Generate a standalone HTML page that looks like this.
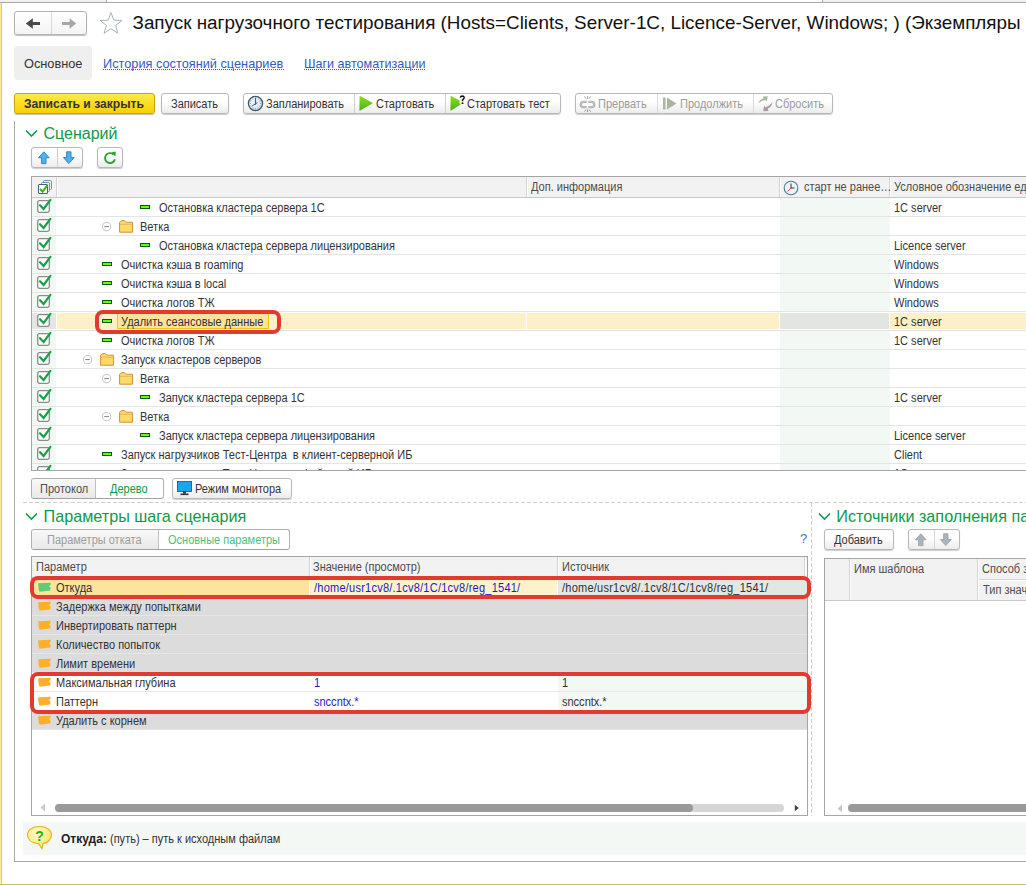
<!DOCTYPE html>
<html><head><meta charset="utf-8"><style>
html,body{margin:0;padding:0;width:1026px;height:885px;overflow:hidden;background:#fff;}
body{position:relative;font-family:"Liberation Sans", sans-serif;}
div,svg{position:absolute;}
.t{line-height:1;white-space:nowrap;}
</style></head><body>
<div style="left:0px;top:0px;width:1026px;height:2px;background:#f0f0f0"></div>
<div style="left:107px;top:0px;width:715px;height:2px;background:#fff"></div>
<div style="left:0px;top:2px;width:1026px;height:1px;background:#a8a8a8"></div>
<div style="left:106px;top:0px;width:1px;height:2px;background:#a8a8a8"></div>
<div style="left:822px;top:0px;width:1px;height:2px;background:#a8a8a8"></div>
<div style="left:0px;top:3px;width:2px;height:882px;background:linear-gradient(90deg,#fde99a 0,#fde99a 1px,#e0cc80 1px)"></div>
<div style="left:0px;top:884px;width:1026px;height:1px;background:#c9ba72"></div>
<div style="left:14px;top:11px;width:73px;height:24px;border:1px solid #b3b3b3;border-radius:3px;box-sizing:border-box;background:linear-gradient(#fff,#f4f4f4);box-shadow:0 1px 1px rgba(0,0,0,.25)"></div>
<div style="left:51px;top:12px;width:1px;height:22px;background:#d8d8d8"></div>
<svg style="left:24px;top:17px" width="18" height="12" viewBox="0 0 18 12"><path d="M1.8 6.5 L8.8 1.3 L8.8 5.1 L16 5.1 L16 7.9 L8.8 7.9 L8.8 11.7 Z" fill="#4a4a4a"/></svg>
<svg style="left:60px;top:17px" width="18" height="12" viewBox="0 0 18 12"><path d="M16.2 6.5 L9.6 1.3 L9.6 5.1 L2 5.1 L2 7.9 L9.6 7.9 L9.6 11.7 Z" fill="#a6a6a6"/></svg>
<svg style="left:98px;top:11px" width="26" height="24" viewBox="0 0 26 24"><path d="M13 1.5 L15.9 9.2 L24 9.4 L17.6 14.4 L19.9 22.3 L13 17.6 L6.1 22.3 L8.4 14.4 L2 9.4 L10.1 9.2 Z" fill="none" stroke="#a9b2bb" stroke-width="1"/></svg>
<div class="t" style="left:132.5px;top:14.04px;font-size:18.85px;color:#111;white-space:nowrap">Запуск нагрузочного тестирования (Hosts=Clients, Server-1C, Licence-Server, Windows; ) (Экземпляры</div>
<div style="left:14px;top:46px;width:78px;height:34px;background:#efefef;border-radius:4px"></div>
<div class="t" style="left:24px;top:57.51px;font-size:12.75px;color:#333;">Основное</div>
<div class="t" style="left:103px;top:57.81px;font-size:12.75px;color:#3558c4;">История состояний сценариев</div>
<div style="left:103px;top:69px;width:181px;height:1px;background:repeating-linear-gradient(90deg,#3558c4 0,#3558c4 1px,transparent 1px,transparent 2px)"></div>
<div class="t" style="left:304px;top:57.98px;font-size:12.55px;color:#3558c4;">Шаги автоматизации</div>
<div style="left:304px;top:69px;width:122px;height:1px;background:repeating-linear-gradient(90deg,#3558c4 0,#3558c4 1px,transparent 1px,transparent 2px)"></div>
<div style="left:14px;top:93px;width:141px;height:21px;border:1px solid #c9a800;border-radius:3px;box-sizing:border-box;background:linear-gradient(#ffe94d,#f6d000);box-shadow:0 1px 1px rgba(0,0,0,.25)"></div>
<div class="t" style="left:24px;top:97.76px;font-size:12.1px;color:#333;font-weight:bold">Записать и закрыть</div>
<div style="left:161px;top:93px;width:68px;height:21px;border:1px solid #b8b8b8;border-radius:3px;box-sizing:border-box;background:linear-gradient(#fff 40%,#ececec);box-shadow:0 1px 1px rgba(0,0,0,.2)"></div>
<div class="t" style="left:171px;top:97.84px;font-size:12px;transform:scaleX(0.917);transform-origin:0 0;color:#333;">Записать</div>
<div style="left:243px;top:93px;width:318px;height:21px;border:1px solid #b8b8b8;border-radius:3px;box-sizing:border-box;background:linear-gradient(#fff 40%,#ececec);box-shadow:0 1px 1px rgba(0,0,0,.2)"></div>
<div style="left:354px;top:94px;width:1px;height:19px;background:#d0d0d0"></div>
<div style="left:445px;top:94px;width:1px;height:19px;background:#d0d0d0"></div>
<svg style="left:247px;top:95px" width="17" height="17" viewBox="0 0 17 17"><defs><radialGradient id="cg" cx="0.35" cy="0.3" r="0.8"><stop offset="0" stop-color="#ffffff"/><stop offset="1" stop-color="#bfe0f5"/></radialGradient></defs><circle cx="8.5" cy="8.5" r="7.1" fill="url(#cg)" stroke="#3d5566" stroke-width="1.3"/><circle cx="8.50" cy="3.30" r="0.6" fill="#e86a5a"/><circle cx="11.10" cy="4.00" r="0.6" fill="#e86a5a"/><circle cx="13.00" cy="5.90" r="0.6" fill="#e86a5a"/><circle cx="13.70" cy="8.50" r="0.6" fill="#e86a5a"/><circle cx="13.00" cy="11.10" r="0.6" fill="#e86a5a"/><circle cx="11.10" cy="13.00" r="0.6" fill="#e86a5a"/><circle cx="8.50" cy="13.70" r="0.6" fill="#e86a5a"/><circle cx="5.90" cy="13.00" r="0.6" fill="#e86a5a"/><circle cx="4.00" cy="11.10" r="0.6" fill="#e86a5a"/><circle cx="3.30" cy="8.50" r="0.6" fill="#e86a5a"/><circle cx="4.00" cy="5.90" r="0.6" fill="#e86a5a"/><circle cx="5.90" cy="4.00" r="0.6" fill="#e86a5a"/><path d="M8.5 2.8 V9.8" stroke="#2a6aa8" stroke-width="1.2"/><path d="M5 11 L10.5 7.6" stroke="#2a6aa8" stroke-width="1"/></svg>
<div class="t" style="left:266px;top:97.84px;font-size:12px;transform:scaleX(0.917);transform-origin:0 0;color:#333;">Запланировать</div>
<svg style="left:358px;top:95px" width="16" height="17" viewBox="0 0 16 17"><defs><linearGradient id="pg" x1="0" y1="0" x2="0" y2="1"><stop offset="0" stop-color="#8ede14"/><stop offset="1" stop-color="#4caf22"/></linearGradient></defs><path d="M1.6 1.6 Q1.2 0.6 2.2 1.1 L14.4 7.7 Q15 8.1 14.4 8.5 L2.2 15.6 Q1.2 16.1 1.4 15 Z" fill="url(#pg)"/></svg>
<div class="t" style="left:376px;top:97.84px;font-size:12px;transform:scaleX(0.917);transform-origin:0 0;color:#333;">Стартовать</div>
<svg style="left:449px;top:95px" width="17" height="17" viewBox="0 0 17 17"><path d="M1.6 1.6 Q1.2 0.6 2.2 1.1 L10.6 5.6 L10.6 8.6 L11.6 9.4 L2.2 15.6 Q1.2 16.1 1.4 15 Z" fill="url(#pg)"/><path d="M11.3 2.6 Q11.6 1.1 13.3 1.1 Q15.2 1.2 15.1 2.9 Q15 4 13.6 4.8 L13.5 6.3" fill="none" stroke="#111" stroke-width="1.5"/><rect x="12.6" y="7.4" width="1.8" height="1.6" fill="#111"/></svg>
<div class="t" style="left:467px;top:97.84px;font-size:12px;transform:scaleX(0.917);transform-origin:0 0;color:#333;">Стартовать тест</div>
<div style="left:575px;top:93px;width:258px;height:21px;border:1px solid #b8b8b8;border-radius:3px;box-sizing:border-box;background:linear-gradient(#fff 40%,#ececec);box-shadow:0 1px 1px rgba(0,0,0,.2)"></div>
<div style="left:657px;top:94px;width:1px;height:19px;background:#dadada"></div>
<div style="left:753px;top:94px;width:1px;height:19px;background:#dadada"></div>
<svg style="left:579px;top:95px" width="18" height="18" viewBox="0 0 18 18"><path d="M7.6 6.8 H4.4 A2.65 2.65 0 0 0 4.4 12.1 H7.6 M9.4 6.8 H12.6 A2.65 2.65 0 0 1 12.6 12.1 H9.4" fill="none" stroke="#a9a9a9" stroke-width="2.3"/><path d="M7.6 6.8 H4.4 A2.65 2.65 0 0 0 4.4 12.1 H7.6 M9.4 6.8 H12.6 A2.65 2.65 0 0 1 12.6 12.1 H9.4" fill="none" stroke="#dadada" stroke-width="0.7"/><path d="M5.2 1.6 L7.3 3.6 M8.5 1.2 V3.8 M11.8 1.6 L9.7 3.6 M5.2 16.6 L7.3 14.6 M8.5 17 V14.4 M11.8 16.6 L9.7 14.6" stroke="#a08c8c" stroke-width="0.9"/></svg>
<div class="t" style="left:598px;top:97.84px;font-size:12px;transform:scaleX(0.917);transform-origin:0 0;color:#9a9a9a;">Прервать</div>
<svg style="left:662px;top:96px" width="16" height="15" viewBox="0 0 16 15"><rect x="1" y="1.5" width="2.5" height="12" fill="#a9b5a0"/><path d="M5 1.5 L14.5 7.5 L5 13.5 Z" fill="#a9b5a0"/></svg>
<div class="t" style="left:680px;top:97.84px;font-size:12px;transform:scaleX(0.917);transform-origin:0 0;color:#9a9a9a;">Продолжить</div>
<svg style="left:757px;top:95px" width="17" height="18" viewBox="0 0 17 18"><path d="M1.2 8.6 C2 5.2 4.2 3.8 6.6 3.4 L5.6 1.4 L10.8 1.3 L9.8 6.6 L8.5 5.0 C5.6 5.4 3 6.8 1.2 8.6 Z" fill="#a9b99e"/><path d="M15.6 6.6 C15.2 10.5 13.2 13 10.6 13.8 L11.6 15.9 L6.2 16.3 L7.0 10.8 L8.5 12.3 C11.6 11.4 14 9.6 15.6 6.6 Z" fill="#b09a9a"/></svg>
<div class="t" style="left:775px;top:97.84px;font-size:12px;transform:scaleX(0.917);transform-origin:0 0;color:#9a9a9a;">Сбросить</div>
<div style="left:14px;top:121px;width:1px;height:741px;background:#a8a8a8"></div>
<div style="left:14px;top:861px;width:1012px;height:1px;background:#a8a8a8"></div>
<svg style="left:25px;top:129px" width="13" height="9" viewBox="0 0 13 9"><path d="M1 1.5 L6.5 7 L12 1.5" fill="none" stroke="#0e9a48" stroke-width="1.6"/></svg>
<div class="t" style="left:43.5px;top:126.26px;font-size:16.0px;color:#0e9a48;">Сценарий</div>
<div style="left:31px;top:147px;width:52px;height:21px;border:1px solid #b8b8b8;border-radius:3px;box-sizing:border-box;background:linear-gradient(#fff 40%,#ececec);box-shadow:0 1px 1px rgba(0,0,0,.2)"></div>
<div style="left:57px;top:148px;width:1px;height:19px;background:#d0d0d0"></div>
<svg style="left:37px;top:150px" width="14" height="15" viewBox="0 0 14 15"><path d="M6.8 1.8 L12.2 7.8 L9 7.8 L9 13.6 L4.6 13.6 L4.6 7.8 L1.4 7.8 Z" fill="#4fb2ee" stroke="#2e7cc0" stroke-width="0.9" stroke-linejoin="round"/></svg>
<svg style="left:62px;top:150px" width="14" height="15" viewBox="0 0 14 15"><path d="M6.8 13.6 L12.2 7.6 L9 7.6 L9 1.8 L4.6 1.8 L4.6 7.6 L1.4 7.6 Z" fill="#4fb2ee" stroke="#2e7cc0" stroke-width="0.9" stroke-linejoin="round"/></svg>
<div style="left:97px;top:147px;width:26px;height:21px;border:1px solid #b8b8b8;border-radius:3px;box-sizing:border-box;background:linear-gradient(#fff 40%,#ececec);box-shadow:0 1px 1px rgba(0,0,0,.2)"></div>
<svg style="left:102px;top:150px" width="16" height="16" viewBox="0 0 16 16"><path d="M11.6 4.6 A5 5 0 1 0 12.9 9.2" fill="none" stroke="#2aa52a" stroke-width="1.9"/><path d="M9.2 2.6 L13.8 1.6 L13.4 6.4 Z" fill="#2aa52a"/></svg>
<div style="left:31px;top:176px;width:1000px;height:295px;border:1px solid #a5a5a5;box-sizing:border-box;overflow:hidden;background:#fff">
<div style="left:0px;top:0px;width:994px;height:20px;background:#f2f2f2"></div>
<div style="left:0px;top:20px;width:994px;height:1px;background:#c8c8c8"></div>
<div style="left:24px;top:0px;width:1px;height:20px;background:#d4d4d4"></div>
<div style="left:25px;top:0px;width:1px;height:20px;background:#fff"></div>
<div style="left:494px;top:0px;width:1px;height:20px;background:#d4d4d4"></div>
<div style="left:495px;top:0px;width:1px;height:20px;background:#fff"></div>
<div style="left:747px;top:0px;width:1px;height:20px;background:#d4d4d4"></div>
<div style="left:748px;top:0px;width:1px;height:20px;background:#fff"></div>
<div style="left:857px;top:0px;width:1px;height:20px;background:#d4d4d4"></div>
<div style="left:858px;top:0px;width:1px;height:20px;background:#fff"></div>
<svg style="left:5px;top:2px" width="16" height="16" viewBox="0 0 16 16"><rect x="6.5" y="1.5" width="8" height="9" rx="1" fill="#e9f3e0" stroke="#6a8aa0" stroke-width="0.9"/><rect x="4.5" y="3.5" width="8" height="9" rx="1" fill="#e9f3e0" stroke="#6a8aa0" stroke-width="0.9"/><rect x="1.5" y="5.5" width="9" height="9" rx="1" fill="#fff" stroke="#3f6483" stroke-width="1.1"/><path d="M3 10 L5.5 12.5 L10.5 6.5" stroke="#3fb020" stroke-width="2" fill="none"/></svg>
<div class="t" style="left:499px;top:3.84px;font-size:12px;transform:scaleX(0.917);transform-origin:0 0;color:#4d4d4d;">Доп. информация</div>
<svg style="left:751px;top:3px" width="16" height="16" viewBox="0 0 16 16"><circle cx="8" cy="8" r="6.8" fill="#eef3f8" stroke="#56779a" stroke-width="1.1"/><path d="M8 3.5 V8 H11.5" stroke="#333" stroke-width="1" fill="none"/><path d="M8 8 L4.8 11.5" stroke="#e03030" stroke-width="1"/></svg>
<div class="t" style="left:772px;top:3.84px;font-size:12px;transform:scaleX(0.917);transform-origin:0 0;color:#4d4d4d;">старт не ранее…</div>
<div class="t" style="left:862px;top:3.84px;font-size:12px;transform:scaleX(0.917);transform-origin:0 0;color:#4d4d4d;white-space:nowrap">Условное обозначение ед</div>
<div style="left:25px;top:21px;width:969px;height:18px;background:#fff"></div>
<div style="left:0px;top:21px;width:24px;height:18px;background:#f2f8f4"></div>
<div style="left:748px;top:21px;width:110px;height:18px;background:#f2f8f4"></div>
<div style="left:0px;top:39px;width:994px;height:1px;background:#e4e4e4"></div>
<svg style="left:4px;top:21px" width="17" height="17" viewBox="0 0 17 17"><rect x="1.7" y="2.7" width="11.6" height="11.6" rx="1.8" fill="#fff" stroke="#8a8a8a" stroke-width="1.3"/><path d="M4 7.2 L7.6 11 L14.4 1.8" stroke="#17a14a" stroke-width="2.2" fill="none" stroke-linecap="round"/></svg>
<div style="left:108px;top:28px;width:10px;height:4px;background:#66ff00;border:1px solid #075a07;box-sizing:border-box"></div>
<div class="t" style="left:127px;top:25.34px;font-size:12px;transform:scaleX(0.917);transform-origin:0 0;color:#333;white-space:nowrap">Остановка кластера сервера 1С</div>
<div class="t" style="left:862px;top:25.34px;font-size:12px;transform:scaleX(0.917);transform-origin:0 0;color:#333;">1С server</div>
<div style="left:25px;top:40px;width:969px;height:18px;background:#fff"></div>
<div style="left:0px;top:40px;width:24px;height:18px;background:#f2f8f4"></div>
<div style="left:748px;top:40px;width:110px;height:18px;background:#f2f8f4"></div>
<div style="left:0px;top:58px;width:994px;height:1px;background:#e4e4e4"></div>
<svg style="left:4px;top:40px" width="17" height="17" viewBox="0 0 17 17"><rect x="1.7" y="2.7" width="11.6" height="11.6" rx="1.8" fill="#fff" stroke="#8a8a8a" stroke-width="1.3"/><path d="M4 7.2 L7.6 11 L14.4 1.8" stroke="#17a14a" stroke-width="2.2" fill="none" stroke-linecap="round"/></svg>
<svg style="left:70px;top:45px" width="10" height="10" viewBox="0 0 10 10"><circle cx="4.6" cy="4.6" r="4.1" fill="#fff" stroke="#b4b4b4" stroke-width="0.8"/><path d="M2.3 4.6 H6.9" stroke="#707070" stroke-width="0.9"/></svg>
<svg style="left:87px;top:43px" width="15" height="13" viewBox="0 0 15 13"><path d="M0.6 12.2 V2.6 Q0.6 2 1.2 1.8 L2.6 0.6 H5.4 L6.8 2.2 H13 Q13.6 2.2 13.6 2.8 V12.2 Z" fill="#fdda6a" stroke="#d28f3a" stroke-width="1"/><path d="M0.8 4.3 H13.4" stroke="#e9b24c" stroke-width="0.9"/></svg>
<div class="t" style="left:108px;top:44.34px;font-size:12px;transform:scaleX(0.917);transform-origin:0 0;color:#333;white-space:nowrap">Ветка</div>
<div style="left:25px;top:59px;width:969px;height:18px;background:#fff"></div>
<div style="left:0px;top:59px;width:24px;height:18px;background:#f2f8f4"></div>
<div style="left:748px;top:59px;width:110px;height:18px;background:#f2f8f4"></div>
<div style="left:0px;top:77px;width:994px;height:1px;background:#e4e4e4"></div>
<svg style="left:4px;top:59px" width="17" height="17" viewBox="0 0 17 17"><rect x="1.7" y="2.7" width="11.6" height="11.6" rx="1.8" fill="#fff" stroke="#8a8a8a" stroke-width="1.3"/><path d="M4 7.2 L7.6 11 L14.4 1.8" stroke="#17a14a" stroke-width="2.2" fill="none" stroke-linecap="round"/></svg>
<div style="left:108px;top:66px;width:10px;height:4px;background:#66ff00;border:1px solid #075a07;box-sizing:border-box"></div>
<div class="t" style="left:127px;top:63.34px;font-size:12px;transform:scaleX(0.917);transform-origin:0 0;color:#333;white-space:nowrap">Остановка кластера сервера лицензирования</div>
<div class="t" style="left:862px;top:63.34px;font-size:12px;transform:scaleX(0.917);transform-origin:0 0;color:#333;">Licence server</div>
<div style="left:25px;top:78px;width:969px;height:18px;background:#fff"></div>
<div style="left:0px;top:78px;width:24px;height:18px;background:#f2f8f4"></div>
<div style="left:748px;top:78px;width:110px;height:18px;background:#f2f8f4"></div>
<div style="left:0px;top:96px;width:994px;height:1px;background:#e4e4e4"></div>
<svg style="left:4px;top:78px" width="17" height="17" viewBox="0 0 17 17"><rect x="1.7" y="2.7" width="11.6" height="11.6" rx="1.8" fill="#fff" stroke="#8a8a8a" stroke-width="1.3"/><path d="M4 7.2 L7.6 11 L14.4 1.8" stroke="#17a14a" stroke-width="2.2" fill="none" stroke-linecap="round"/></svg>
<div style="left:70px;top:85px;width:10px;height:4px;background:#66ff00;border:1px solid #075a07;box-sizing:border-box"></div>
<div class="t" style="left:89px;top:82.34px;font-size:12px;transform:scaleX(0.917);transform-origin:0 0;color:#333;white-space:nowrap">Очистка кэша в roaming</div>
<div class="t" style="left:862px;top:82.34px;font-size:12px;transform:scaleX(0.917);transform-origin:0 0;color:#333;">Windows</div>
<div style="left:25px;top:97px;width:969px;height:18px;background:#fff"></div>
<div style="left:0px;top:97px;width:24px;height:18px;background:#f2f8f4"></div>
<div style="left:748px;top:97px;width:110px;height:18px;background:#f2f8f4"></div>
<div style="left:0px;top:115px;width:994px;height:1px;background:#e4e4e4"></div>
<svg style="left:4px;top:97px" width="17" height="17" viewBox="0 0 17 17"><rect x="1.7" y="2.7" width="11.6" height="11.6" rx="1.8" fill="#fff" stroke="#8a8a8a" stroke-width="1.3"/><path d="M4 7.2 L7.6 11 L14.4 1.8" stroke="#17a14a" stroke-width="2.2" fill="none" stroke-linecap="round"/></svg>
<div style="left:70px;top:104px;width:10px;height:4px;background:#66ff00;border:1px solid #075a07;box-sizing:border-box"></div>
<div class="t" style="left:89px;top:101.34px;font-size:12px;transform:scaleX(0.917);transform-origin:0 0;color:#333;white-space:nowrap">Очистка кэша в local</div>
<div class="t" style="left:862px;top:101.34px;font-size:12px;transform:scaleX(0.917);transform-origin:0 0;color:#333;">Windows</div>
<div style="left:25px;top:116px;width:969px;height:18px;background:#fff"></div>
<div style="left:0px;top:116px;width:24px;height:18px;background:#f2f8f4"></div>
<div style="left:748px;top:116px;width:110px;height:18px;background:#f2f8f4"></div>
<div style="left:0px;top:134px;width:994px;height:1px;background:#e4e4e4"></div>
<svg style="left:4px;top:116px" width="17" height="17" viewBox="0 0 17 17"><rect x="1.7" y="2.7" width="11.6" height="11.6" rx="1.8" fill="#fff" stroke="#8a8a8a" stroke-width="1.3"/><path d="M4 7.2 L7.6 11 L14.4 1.8" stroke="#17a14a" stroke-width="2.2" fill="none" stroke-linecap="round"/></svg>
<div style="left:70px;top:123px;width:10px;height:4px;background:#66ff00;border:1px solid #075a07;box-sizing:border-box"></div>
<div class="t" style="left:89px;top:120.34px;font-size:12px;transform:scaleX(0.917);transform-origin:0 0;color:#333;white-space:nowrap">Очистка логов ТЖ</div>
<div class="t" style="left:862px;top:120.34px;font-size:12px;transform:scaleX(0.917);transform-origin:0 0;color:#333;">Windows</div>
<div style="left:25px;top:135px;width:969px;height:18px;background:#fdf0c8"></div>
<div style="left:0px;top:135px;width:24px;height:18px;background:#f2f8f4"></div>
<div style="left:748px;top:135px;width:110px;height:18px;background:#e2e5e1"></div>
<div style="left:0px;top:135px;width:24px;height:18px;background:#e3e6e3"></div>
<div style="left:0px;top:135px;width:994px;height:1px;background:#fff"></div>
<div style="left:0px;top:152px;width:994px;height:1px;background:#fff"></div>
<div style="left:24px;top:135px;width:1px;height:18px;background:#fff"></div>
<div style="left:494px;top:135px;width:1px;height:18px;background:#fff"></div>
<div style="left:747px;top:135px;width:1px;height:18px;background:#fff"></div>
<div style="left:857px;top:135px;width:1px;height:18px;background:#fff"></div>
<div style="left:0px;top:153px;width:994px;height:1px;background:#e4e4e4"></div>
<svg style="left:4px;top:135px" width="17" height="17" viewBox="0 0 17 17"><rect x="1.7" y="2.7" width="11.6" height="11.6" rx="1.8" fill="#fff" stroke="#8a8a8a" stroke-width="1.3"/><path d="M4 7.2 L7.6 11 L14.4 1.8" stroke="#17a14a" stroke-width="2.2" fill="none" stroke-linecap="round"/></svg>
<div style="left:70px;top:142px;width:10px;height:4px;background:#66ff00;border:1px solid #075a07;box-sizing:border-box"></div>
<div style="left:85px;top:136px;width:152px;height:16px;background:#fde39b;border-left:1px solid #f5c21a;border-bottom:1px solid #f5c21a;border-right:1px solid #f5c21a;box-sizing:border-box"></div>
<div class="t" style="left:89px;top:139.34px;font-size:12px;transform:scaleX(0.917);transform-origin:0 0;color:#333;white-space:nowrap">Удалить сеансовые данные</div>
<div class="t" style="left:862px;top:139.34px;font-size:12px;transform:scaleX(0.917);transform-origin:0 0;color:#333;">1С server</div>
<div style="left:25px;top:154px;width:969px;height:18px;background:#fff"></div>
<div style="left:0px;top:154px;width:24px;height:18px;background:#f2f8f4"></div>
<div style="left:748px;top:154px;width:110px;height:18px;background:#f2f8f4"></div>
<div style="left:0px;top:172px;width:994px;height:1px;background:#e4e4e4"></div>
<svg style="left:4px;top:154px" width="17" height="17" viewBox="0 0 17 17"><rect x="1.7" y="2.7" width="11.6" height="11.6" rx="1.8" fill="#fff" stroke="#8a8a8a" stroke-width="1.3"/><path d="M4 7.2 L7.6 11 L14.4 1.8" stroke="#17a14a" stroke-width="2.2" fill="none" stroke-linecap="round"/></svg>
<div style="left:70px;top:161px;width:10px;height:4px;background:#66ff00;border:1px solid #075a07;box-sizing:border-box"></div>
<div class="t" style="left:89px;top:158.34px;font-size:12px;transform:scaleX(0.917);transform-origin:0 0;color:#333;white-space:nowrap">Очистка логов ТЖ</div>
<div class="t" style="left:862px;top:158.34px;font-size:12px;transform:scaleX(0.917);transform-origin:0 0;color:#333;">1С server</div>
<div style="left:25px;top:173px;width:969px;height:18px;background:#fff"></div>
<div style="left:0px;top:173px;width:24px;height:18px;background:#f2f8f4"></div>
<div style="left:748px;top:173px;width:110px;height:18px;background:#f2f8f4"></div>
<div style="left:0px;top:191px;width:994px;height:1px;background:#e4e4e4"></div>
<svg style="left:4px;top:173px" width="17" height="17" viewBox="0 0 17 17"><rect x="1.7" y="2.7" width="11.6" height="11.6" rx="1.8" fill="#fff" stroke="#8a8a8a" stroke-width="1.3"/><path d="M4 7.2 L7.6 11 L14.4 1.8" stroke="#17a14a" stroke-width="2.2" fill="none" stroke-linecap="round"/></svg>
<svg style="left:51px;top:178px" width="10" height="10" viewBox="0 0 10 10"><circle cx="4.6" cy="4.6" r="4.1" fill="#fff" stroke="#b4b4b4" stroke-width="0.8"/><path d="M2.3 4.6 H6.9" stroke="#707070" stroke-width="0.9"/></svg>
<svg style="left:68px;top:176px" width="15" height="13" viewBox="0 0 15 13"><path d="M0.6 12.2 V2.6 Q0.6 2 1.2 1.8 L2.6 0.6 H5.4 L6.8 2.2 H13 Q13.6 2.2 13.6 2.8 V12.2 Z" fill="#fdda6a" stroke="#d28f3a" stroke-width="1"/><path d="M0.8 4.3 H13.4" stroke="#e9b24c" stroke-width="0.9"/></svg>
<div class="t" style="left:89px;top:177.34px;font-size:12px;transform:scaleX(0.917);transform-origin:0 0;color:#333;white-space:nowrap">Запуск кластеров серверов</div>
<div style="left:25px;top:192px;width:969px;height:18px;background:#fff"></div>
<div style="left:0px;top:192px;width:24px;height:18px;background:#f2f8f4"></div>
<div style="left:748px;top:192px;width:110px;height:18px;background:#f2f8f4"></div>
<div style="left:0px;top:210px;width:994px;height:1px;background:#e4e4e4"></div>
<svg style="left:4px;top:192px" width="17" height="17" viewBox="0 0 17 17"><rect x="1.7" y="2.7" width="11.6" height="11.6" rx="1.8" fill="#fff" stroke="#8a8a8a" stroke-width="1.3"/><path d="M4 7.2 L7.6 11 L14.4 1.8" stroke="#17a14a" stroke-width="2.2" fill="none" stroke-linecap="round"/></svg>
<svg style="left:70px;top:197px" width="10" height="10" viewBox="0 0 10 10"><circle cx="4.6" cy="4.6" r="4.1" fill="#fff" stroke="#b4b4b4" stroke-width="0.8"/><path d="M2.3 4.6 H6.9" stroke="#707070" stroke-width="0.9"/></svg>
<svg style="left:87px;top:195px" width="15" height="13" viewBox="0 0 15 13"><path d="M0.6 12.2 V2.6 Q0.6 2 1.2 1.8 L2.6 0.6 H5.4 L6.8 2.2 H13 Q13.6 2.2 13.6 2.8 V12.2 Z" fill="#fdda6a" stroke="#d28f3a" stroke-width="1"/><path d="M0.8 4.3 H13.4" stroke="#e9b24c" stroke-width="0.9"/></svg>
<div class="t" style="left:108px;top:196.34px;font-size:12px;transform:scaleX(0.917);transform-origin:0 0;color:#333;white-space:nowrap">Ветка</div>
<div style="left:25px;top:211px;width:969px;height:18px;background:#fff"></div>
<div style="left:0px;top:211px;width:24px;height:18px;background:#f2f8f4"></div>
<div style="left:748px;top:211px;width:110px;height:18px;background:#f2f8f4"></div>
<div style="left:0px;top:229px;width:994px;height:1px;background:#e4e4e4"></div>
<svg style="left:4px;top:211px" width="17" height="17" viewBox="0 0 17 17"><rect x="1.7" y="2.7" width="11.6" height="11.6" rx="1.8" fill="#fff" stroke="#8a8a8a" stroke-width="1.3"/><path d="M4 7.2 L7.6 11 L14.4 1.8" stroke="#17a14a" stroke-width="2.2" fill="none" stroke-linecap="round"/></svg>
<div style="left:108px;top:218px;width:10px;height:4px;background:#66ff00;border:1px solid #075a07;box-sizing:border-box"></div>
<div class="t" style="left:127px;top:215.34px;font-size:12px;transform:scaleX(0.917);transform-origin:0 0;color:#333;white-space:nowrap">Запуск кластера сервера 1С</div>
<div class="t" style="left:862px;top:215.34px;font-size:12px;transform:scaleX(0.917);transform-origin:0 0;color:#333;">1С server</div>
<div style="left:25px;top:230px;width:969px;height:18px;background:#fff"></div>
<div style="left:0px;top:230px;width:24px;height:18px;background:#f2f8f4"></div>
<div style="left:748px;top:230px;width:110px;height:18px;background:#f2f8f4"></div>
<div style="left:0px;top:248px;width:994px;height:1px;background:#e4e4e4"></div>
<svg style="left:4px;top:230px" width="17" height="17" viewBox="0 0 17 17"><rect x="1.7" y="2.7" width="11.6" height="11.6" rx="1.8" fill="#fff" stroke="#8a8a8a" stroke-width="1.3"/><path d="M4 7.2 L7.6 11 L14.4 1.8" stroke="#17a14a" stroke-width="2.2" fill="none" stroke-linecap="round"/></svg>
<svg style="left:70px;top:235px" width="10" height="10" viewBox="0 0 10 10"><circle cx="4.6" cy="4.6" r="4.1" fill="#fff" stroke="#b4b4b4" stroke-width="0.8"/><path d="M2.3 4.6 H6.9" stroke="#707070" stroke-width="0.9"/></svg>
<svg style="left:87px;top:233px" width="15" height="13" viewBox="0 0 15 13"><path d="M0.6 12.2 V2.6 Q0.6 2 1.2 1.8 L2.6 0.6 H5.4 L6.8 2.2 H13 Q13.6 2.2 13.6 2.8 V12.2 Z" fill="#fdda6a" stroke="#d28f3a" stroke-width="1"/><path d="M0.8 4.3 H13.4" stroke="#e9b24c" stroke-width="0.9"/></svg>
<div class="t" style="left:108px;top:234.34px;font-size:12px;transform:scaleX(0.917);transform-origin:0 0;color:#333;white-space:nowrap">Ветка</div>
<div style="left:25px;top:249px;width:969px;height:18px;background:#fff"></div>
<div style="left:0px;top:249px;width:24px;height:18px;background:#f2f8f4"></div>
<div style="left:748px;top:249px;width:110px;height:18px;background:#f2f8f4"></div>
<div style="left:0px;top:267px;width:994px;height:1px;background:#e4e4e4"></div>
<svg style="left:4px;top:249px" width="17" height="17" viewBox="0 0 17 17"><rect x="1.7" y="2.7" width="11.6" height="11.6" rx="1.8" fill="#fff" stroke="#8a8a8a" stroke-width="1.3"/><path d="M4 7.2 L7.6 11 L14.4 1.8" stroke="#17a14a" stroke-width="2.2" fill="none" stroke-linecap="round"/></svg>
<div style="left:108px;top:256px;width:10px;height:4px;background:#66ff00;border:1px solid #075a07;box-sizing:border-box"></div>
<div class="t" style="left:127px;top:253.34px;font-size:12px;transform:scaleX(0.917);transform-origin:0 0;color:#333;white-space:nowrap">Запуск кластера сервера лицензирования</div>
<div class="t" style="left:862px;top:253.34px;font-size:12px;transform:scaleX(0.917);transform-origin:0 0;color:#333;">Licence server</div>
<div style="left:25px;top:268px;width:969px;height:18px;background:#fff"></div>
<div style="left:0px;top:268px;width:24px;height:18px;background:#f2f8f4"></div>
<div style="left:748px;top:268px;width:110px;height:18px;background:#f2f8f4"></div>
<div style="left:0px;top:286px;width:994px;height:1px;background:#e4e4e4"></div>
<svg style="left:4px;top:268px" width="17" height="17" viewBox="0 0 17 17"><rect x="1.7" y="2.7" width="11.6" height="11.6" rx="1.8" fill="#fff" stroke="#8a8a8a" stroke-width="1.3"/><path d="M4 7.2 L7.6 11 L14.4 1.8" stroke="#17a14a" stroke-width="2.2" fill="none" stroke-linecap="round"/></svg>
<div style="left:70px;top:275px;width:10px;height:4px;background:#66ff00;border:1px solid #075a07;box-sizing:border-box"></div>
<div class="t" style="left:89px;top:272.34px;font-size:12px;transform:scaleX(0.917);transform-origin:0 0;color:#333;white-space:nowrap">Запуск нагрузчиков Тест-Центра&nbsp; в клиент-серверной ИБ</div>
<div class="t" style="left:862px;top:272.34px;font-size:12px;transform:scaleX(0.917);transform-origin:0 0;color:#333;">Client</div>
<div style="left:25px;top:287px;width:969px;height:18px;background:#fff"></div>
<div style="left:0px;top:287px;width:24px;height:18px;background:#f2f8f4"></div>
<div style="left:748px;top:287px;width:110px;height:18px;background:#f2f8f4"></div>
<div style="left:0px;top:305px;width:994px;height:1px;background:#e4e4e4"></div>
<svg style="left:4px;top:287px" width="17" height="17" viewBox="0 0 17 17"><rect x="1.7" y="2.7" width="11.6" height="11.6" rx="1.8" fill="#fff" stroke="#8a8a8a" stroke-width="1.3"/><path d="M4 7.2 L7.6 11 L14.4 1.8" stroke="#17a14a" stroke-width="2.2" fill="none" stroke-linecap="round"/></svg>
<div style="left:70px;top:294px;width:10px;height:4px;background:#66ff00;border:1px solid #075a07;box-sizing:border-box"></div>
<div class="t" style="left:89px;top:291.34px;font-size:12px;transform:scaleX(0.917);transform-origin:0 0;color:#333;white-space:nowrap">Запуск нагрузчиков Тест-Центра&nbsp; в файловой ИБ</div>
<div class="t" style="left:862px;top:291.34px;font-size:12px;transform:scaleX(0.917);transform-origin:0 0;color:#333;">1С server</div>
</div>
<div style="left:95px;top:310px;width:186px;height:24px;border:4.8px solid #e23a2e;border-radius:8px;box-sizing:border-box"></div>
<div style="left:31px;top:478px;width:133px;height:21px;border:1px solid #b0b0b0;border-bottom-color:#a0a0a0;border-radius:3px;box-sizing:border-box;background:#fff"></div>
<div style="left:32px;top:479px;width:63px;height:19px;background:linear-gradient(#f8f8f8,#e9e9e9);border-radius:2px 0 0 2px"></div>
<div style="left:95px;top:479px;width:1px;height:19px;background:#c0c0c0"></div>
<div class="t" style="left:40px;top:482.84px;font-size:12px;transform:scaleX(0.917);transform-origin:0 0;color:#4d4d4d;">Протокол</div>
<div class="t" style="left:110px;top:482.84px;font-size:12px;transform:scaleX(0.917);transform-origin:0 0;color:#0e9a48;">Дерево</div>
<div style="left:172px;top:478px;width:120px;height:21px;border:1px solid #b8b8b8;border-radius:3px;box-sizing:border-box;background:linear-gradient(#fff 40%,#ececec);box-shadow:0 1px 1px rgba(0,0,0,.2)"></div>
<svg style="left:177px;top:480px" width="17" height="17" viewBox="0 0 17 17"><rect x="0.5" y="1.5" width="14" height="10" fill="#19a6ef" stroke="#1f5f95" stroke-width="0.9"/><rect x="6" y="11.5" width="3" height="2" fill="#333"/><rect x="3.5" y="13.5" width="8" height="1.6" fill="#333"/></svg>
<div class="t" style="left:195px;top:482.84px;font-size:12px;transform:scaleX(0.917);transform-origin:0 0;color:#333;">Режим монитора</div>
<div style="left:23px;top:502px;width:1003px;height:1px;background:repeating-linear-gradient(90deg,#cfcfcf 0,#cfcfcf 4px,transparent 4px,transparent 6px)"></div>
<div style="left:811px;top:503px;width:1px;height:313px;background:repeating-linear-gradient(180deg,#cfcfcf 0,#cfcfcf 4px,transparent 4px,transparent 6px)"></div>
<svg style="left:25px;top:512px" width="13" height="9" viewBox="0 0 13 9"><path d="M1 1.5 L6.5 7 L12 1.5" fill="none" stroke="#0e9a48" stroke-width="1.6"/></svg>
<div class="t" style="left:43.5px;top:507.59px;font-size:16.2px;color:#0e9a48;">Параметры шага сценария</div>
<div style="left:31px;top:529px;width:259px;height:21px;border:1px solid #b0b0b0;border-bottom-color:#a0a0a0;border-radius:3px;box-sizing:border-box;background:#fff"></div>
<div style="left:32px;top:530px;width:126px;height:19px;background:linear-gradient(#f8f8f8,#e9e9e9);border-radius:2px 0 0 2px"></div>
<div style="left:158px;top:530px;width:1px;height:19px;background:#c0c0c0"></div>
<div class="t" style="left:47px;top:533.84px;font-size:12px;transform:scaleX(0.917);transform-origin:0 0;color:#9c9c9c;">Параметры отката</div>
<div class="t" style="left:168px;top:533.84px;font-size:12px;transform:scaleX(0.917);transform-origin:0 0;color:#4fbf80;">Основные параметры</div>
<div class="t" style="left:800px;top:532.00px;font-size:13px;color:#2a7dc4;">?</div>
<div style="left:31px;top:556px;width:777px;height:260px;border:1px solid #a5a5a5;box-sizing:border-box;overflow:hidden;background:#fff">
<div style="left:0px;top:0px;width:775px;height:20px;background:#f2f2f2"></div>
<div style="left:0px;top:20px;width:775px;height:1px;background:#c8c8c8"></div>
<div style="left:277px;top:0px;width:1px;height:20px;background:#d4d4d4"></div>
<div style="left:278px;top:0px;width:1px;height:20px;background:#fff"></div>
<div style="left:525px;top:0px;width:1px;height:20px;background:#d4d4d4"></div>
<div style="left:526px;top:0px;width:1px;height:20px;background:#fff"></div>
<div style="left:772px;top:0px;width:1px;height:20px;background:#d4d4d4"></div>
<div style="left:773px;top:0px;width:1px;height:20px;background:#fff"></div>
<div class="t" style="left:4px;top:3.84px;font-size:12px;transform:scaleX(0.917);transform-origin:0 0;color:#4d4d4d;white-space:nowrap;">Параметр</div>
<div class="t" style="left:281px;top:3.84px;font-size:12px;transform:scaleX(0.917);transform-origin:0 0;color:#4d4d4d;white-space:nowrap;">Значение (просмотр)</div>
<div class="t" style="left:530px;top:3.84px;font-size:12px;transform:scaleX(0.917);transform-origin:0 0;color:#4d4d4d;white-space:nowrap;">Источник</div>
<div style="left:0px;top:21px;width:277px;height:18px;background:#fde39b"></div>
<div style="left:278px;top:21px;width:247px;height:18px;background:#fdf2cc"></div>
<div style="left:526px;top:21px;width:249px;height:18px;background:#e3e7e4"></div>
<div style="left:0px;top:39px;width:775px;height:1px;background:#e8e8e8"></div>
<svg style="left:5px;top:25px" width="15" height="11" viewBox="0 0 15 11"><path d="M1.2 1.2 L13.8 0.8 L13.3 3.2 L11.8 4.6 L13.6 5.6 L13.2 8.6 L2.6 9.8 L1.8 7.8 L1.4 5 Z" fill="#5ccc78"/></svg>
<div class="t" style="left:24px;top:24.84px;font-size:12px;transform:scaleX(0.917);transform-origin:0 0;color:#333;white-space:nowrap;">Откуда</div>
<div class="t" style="left:282px;top:24.84px;font-size:12px;transform:scaleX(0.917);transform-origin:0 0;color:#1c1cc8;white-space:nowrap;letter-spacing:0.26px">/home/usr1cv8/.1cv8/1C/1cv8/reg_1541/</div>
<div class="t" style="left:530px;top:24.84px;font-size:12px;transform:scaleX(0.917);transform-origin:0 0;color:#333;white-space:nowrap;letter-spacing:0.26px">/home/usr1cv8/.1cv8/1C/1cv8/reg_1541/</div>
<div style="left:0px;top:40px;width:775px;height:18px;background:#dcdcdc"></div>
<div style="left:0px;top:58px;width:775px;height:1px;background:#e6e6e6"></div>
<svg style="left:5px;top:44px" width="15" height="11" viewBox="0 0 15 11"><path d="M1.2 1.2 L13.8 0.8 L13.3 3.2 L11.8 4.6 L13.6 5.6 L13.2 8.6 L2.6 9.8 L1.8 7.8 L1.4 5 Z" fill="#fbb02a"/></svg>
<div class="t" style="left:24px;top:43.84px;font-size:12px;transform:scaleX(0.917);transform-origin:0 0;color:#333;white-space:nowrap;">Задержка между попытками</div>
<div style="left:0px;top:59px;width:775px;height:18px;background:#dcdcdc"></div>
<div style="left:0px;top:77px;width:775px;height:1px;background:#e6e6e6"></div>
<svg style="left:5px;top:63px" width="15" height="11" viewBox="0 0 15 11"><path d="M1.2 1.2 L13.8 0.8 L13.3 3.2 L11.8 4.6 L13.6 5.6 L13.2 8.6 L2.6 9.8 L1.8 7.8 L1.4 5 Z" fill="#fbb02a"/></svg>
<div class="t" style="left:24px;top:62.84px;font-size:12px;transform:scaleX(0.917);transform-origin:0 0;color:#333;white-space:nowrap;">Инвертировать паттерн</div>
<div style="left:0px;top:78px;width:775px;height:18px;background:#dcdcdc"></div>
<div style="left:0px;top:96px;width:775px;height:1px;background:#e6e6e6"></div>
<svg style="left:5px;top:82px" width="15" height="11" viewBox="0 0 15 11"><path d="M1.2 1.2 L13.8 0.8 L13.3 3.2 L11.8 4.6 L13.6 5.6 L13.2 8.6 L2.6 9.8 L1.8 7.8 L1.4 5 Z" fill="#fbb02a"/></svg>
<div class="t" style="left:24px;top:81.84px;font-size:12px;transform:scaleX(0.917);transform-origin:0 0;color:#333;white-space:nowrap;">Количество попыток</div>
<div style="left:0px;top:97px;width:775px;height:18px;background:#dcdcdc"></div>
<div style="left:0px;top:115px;width:775px;height:1px;background:#e6e6e6"></div>
<svg style="left:5px;top:101px" width="15" height="11" viewBox="0 0 15 11"><path d="M1.2 1.2 L13.8 0.8 L13.3 3.2 L11.8 4.6 L13.6 5.6 L13.2 8.6 L2.6 9.8 L1.8 7.8 L1.4 5 Z" fill="#fbb02a"/></svg>
<div class="t" style="left:24px;top:100.84px;font-size:12px;transform:scaleX(0.917);transform-origin:0 0;color:#333;white-space:nowrap;">Лимит времени</div>
<div style="left:0px;top:116px;width:526px;height:18px;background:#fff"></div>
<div style="left:526px;top:116px;width:249px;height:18px;background:#f2f8f4"></div>
<div style="left:0px;top:134px;width:775px;height:1px;background:#e8e8e8"></div>
<svg style="left:5px;top:120px" width="15" height="11" viewBox="0 0 15 11"><path d="M1.2 1.2 L13.8 0.8 L13.3 3.2 L11.8 4.6 L13.6 5.6 L13.2 8.6 L2.6 9.8 L1.8 7.8 L1.4 5 Z" fill="#fbb02a"/></svg>
<div class="t" style="left:24px;top:119.84px;font-size:12px;transform:scaleX(0.917);transform-origin:0 0;color:#333;white-space:nowrap;">Максимальная глубина</div>
<div class="t" style="left:282px;top:119.84px;font-size:12px;transform:scaleX(0.917);transform-origin:0 0;color:#1c1cc8;white-space:nowrap;letter-spacing:0">1</div>
<div class="t" style="left:530px;top:119.84px;font-size:12px;transform:scaleX(0.917);transform-origin:0 0;color:#333;white-space:nowrap;letter-spacing:0">1</div>
<div style="left:0px;top:135px;width:526px;height:18px;background:#fff"></div>
<div style="left:526px;top:135px;width:249px;height:18px;background:#f2f8f4"></div>
<div style="left:0px;top:153px;width:775px;height:1px;background:#e8e8e8"></div>
<svg style="left:5px;top:139px" width="15" height="11" viewBox="0 0 15 11"><path d="M1.2 1.2 L13.8 0.8 L13.3 3.2 L11.8 4.6 L13.6 5.6 L13.2 8.6 L2.6 9.8 L1.8 7.8 L1.4 5 Z" fill="#fbb02a"/></svg>
<div class="t" style="left:24px;top:138.84px;font-size:12px;transform:scaleX(0.917);transform-origin:0 0;color:#333;white-space:nowrap;">Паттерн</div>
<div class="t" style="left:282px;top:138.84px;font-size:12px;transform:scaleX(0.917);transform-origin:0 0;color:#1c1cc8;white-space:nowrap;letter-spacing:0">snccntx.*</div>
<div class="t" style="left:530px;top:138.84px;font-size:12px;transform:scaleX(0.917);transform-origin:0 0;color:#333;white-space:nowrap;letter-spacing:0">snccntx.*</div>
<div style="left:0px;top:154px;width:775px;height:18px;background:#dcdcdc"></div>
<div style="left:0px;top:172px;width:775px;height:1px;background:#e6e6e6"></div>
<svg style="left:5px;top:158px" width="15" height="11" viewBox="0 0 15 11"><path d="M1.2 1.2 L13.8 0.8 L13.3 3.2 L11.8 4.6 L13.6 5.6 L13.2 8.6 L2.6 9.8 L1.8 7.8 L1.4 5 Z" fill="#fbb02a"/></svg>
<div class="t" style="left:24px;top:157.84px;font-size:12px;transform:scaleX(0.917);transform-origin:0 0;color:#333;white-space:nowrap;">Удалить с корнем</div>
<div style="left:23px;top:247px;width:729px;height:8px;background:#d6d6d6;border-radius:4px"></div>
<div style="left:23px;top:247px;width:638px;height:8px;background:#9a9a9a;border-radius:4px"></div>
<svg style="left:8px;top:246px" width="6" height="9" viewBox="0 0 6 9"><path d="M5 0.5 L0.5 4.5 L5 8.5Z" fill="#c8c8c8"/></svg>
<svg style="left:762px;top:247px" width="6" height="8" viewBox="0 0 6 8"><path d="M0.8 0.8 L4.8 4 L0.8 7.2Z" fill="#404040"/></svg>
</div>
<div style="left:30px;top:576px;width:781px;height:23px;border:4.8px solid #e23a2e;border-radius:8px;box-sizing:border-box"></div>
<div style="left:30px;top:672px;width:781px;height:42px;border:4.8px solid #e23a2e;border-radius:8px;box-sizing:border-box"></div>
<svg style="left:818px;top:512px" width="13" height="9" viewBox="0 0 13 9"><path d="M1 1.5 L6.5 7 L12 1.5" fill="none" stroke="#0e9a48" stroke-width="1.6"/></svg>
<div class="t" style="left:836.3px;top:507.59px;font-size:16.2px;color:#0e9a48;white-space:nowrap">Источники заполнения параметров</div>
<div style="left:824px;top:529px;width:70px;height:21px;border:1px solid #b8b8b8;border-radius:3px;box-sizing:border-box;background:linear-gradient(#fff 40%,#ececec);box-shadow:0 1px 1px rgba(0,0,0,.2)"></div>
<div class="t" style="left:834px;top:533.84px;font-size:12px;transform:scaleX(0.917);transform-origin:0 0;color:#333;">Добавить</div>
<div style="left:908px;top:529px;width:52px;height:21px;border:1px solid #b8b8b8;border-radius:3px;box-sizing:border-box;background:linear-gradient(#fff 40%,#ececec);box-shadow:0 1px 1px rgba(0,0,0,.2)"></div>
<div style="left:934px;top:530px;width:1px;height:19px;background:#d8d8d8"></div>
<svg style="left:914px;top:532px" width="14" height="15" viewBox="0 0 14 15"><path d="M6.8 1.8 L12.2 7.8 L9 7.8 L9 13.6 L4.6 13.6 L4.6 7.8 L1.4 7.8 Z" fill="#aab4bb" stroke="#9aa4ab" stroke-width="0.9" stroke-linejoin="round"/></svg>
<svg style="left:939px;top:532px" width="14" height="15" viewBox="0 0 14 15"><path d="M6.8 13.6 L12.2 7.6 L9 7.6 L9 1.8 L4.6 1.8 L4.6 7.6 L1.4 7.6 Z" fill="#aab4bb" stroke="#9aa4ab" stroke-width="0.9" stroke-linejoin="round"/></svg>
<div style="left:824px;top:558px;width:210px;height:258px;border:1px solid #a5a5a5;box-sizing:border-box;overflow:hidden;background:#fff">
<div style="left:0px;top:0px;width:210px;height:41px;background:#f2f2f2"></div>
<div style="left:0px;top:41px;width:210px;height:1px;background:#c8c8c8"></div>
<div style="left:24px;top:0px;width:1px;height:41px;background:#d4d4d4"></div>
<div style="left:25px;top:0px;width:1px;height:41px;background:#fff"></div>
<div style="left:152px;top:0px;width:1px;height:41px;background:#d4d4d4"></div>
<div style="left:153px;top:0px;width:1px;height:41px;background:#fff"></div>
<div style="left:154px;top:20px;width:60px;height:1px;background:#d4d4d4"></div>
<div style="left:154px;top:21px;width:60px;height:1px;background:#fff"></div>
<div class="t" style="left:29px;top:3.84px;font-size:12px;transform:scaleX(0.917);transform-origin:0 0;color:#4d4d4d;white-space:nowrap;">Имя шаблона</div>
<div class="t" style="left:157px;top:3.84px;font-size:12px;transform:scaleX(0.917);transform-origin:0 0;color:#4d4d4d;white-space:nowrap;">Способ заполнения</div>
<div class="t" style="left:158px;top:24.84px;font-size:12px;transform:scaleX(0.917);transform-origin:0 0;color:#4d4d4d;white-space:nowrap;">Тип значения</div>
<div style="left:23px;top:245px;width:200px;height:8px;background:#9a9a9a;border-radius:4px"></div>
<svg style="left:12px;top:245px" width="6" height="9" viewBox="0 0 6 9"><path d="M5 0.5 L0.5 4.5 L5 8.5Z" fill="#c8c8c8"/></svg>
</div>
<div style="left:23px;top:822px;width:1003px;height:33px;background:#f3f8f5"></div>
<svg style="left:26px;top:825px" width="27" height="25" viewBox="0 0 27 25"><defs><radialGradient id="hg" cx="0.4" cy="0.35" r="0.7"><stop offset="0" stop-color="#fffbd0"/><stop offset="1" stop-color="#fde45a"/></radialGradient></defs><path d="M13.5 1.5 C20.5 1.5 25.5 5 25.5 10 C25.5 14.5 21.5 18 17 18.6 L16 23.8 L12.6 18.6 C5.5 18 1.5 14.5 1.5 10 C1.5 5 6.5 1.5 13.5 1.5Z" fill="url(#hg)" stroke="#dcb41c" stroke-width="1.1"/><text x="13.5" y="15.5" text-anchor="middle" font-family="Liberation Sans" font-weight="bold" font-size="14" fill="#14b414">?</text></svg>
<div class="t" style="left:61px;top:833.14px;font-size:12px;color:#222;font-weight:bold">Откуда:</div>
<div class="t" style="left:110px;top:833.14px;font-size:12px;transform:scaleX(0.917);transform-origin:0 0;color:#333;white-space:nowrap">(путь) – путь к исходным файлам</div>
</body></html>
